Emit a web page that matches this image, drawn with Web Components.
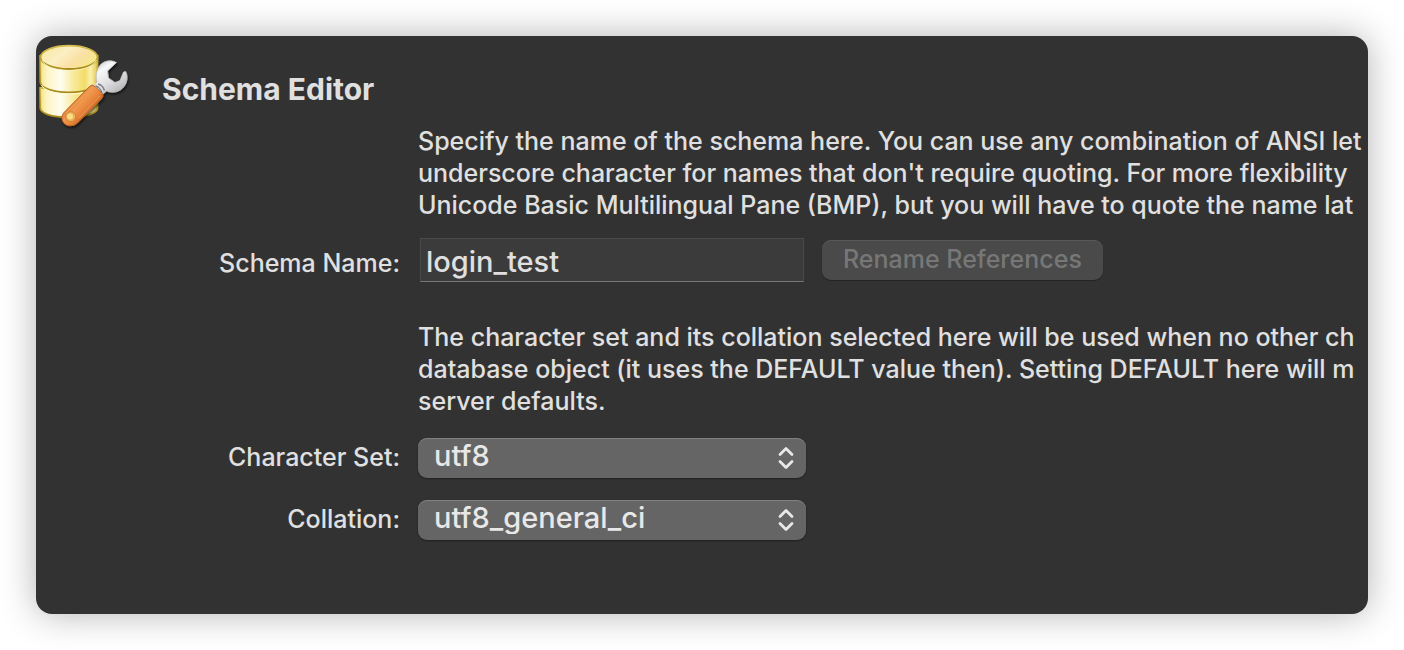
<!DOCTYPE html>
<html lang="en">
<head>
<meta charset="utf-8">
<title>Schema Editor</title>
<style>
  body {
    margin: 0;
    background: #fff;
    color: #e0e0e0;
    font: 500 25px/32px Inter, "Liberation Sans", sans-serif;
    --label-width: 364px;
    --label-gap: 18px;
    --field-width: 388px;
    --control-size: 29px;
  }
</style>
</head>
<body>
<editor-panel>
  <editor-header slot="header">Schema Editor</editor-header>
  <help-text>
    <div>Specify the name of the schema here. You can use any combination of ANSI let</div>
    <div>underscore character for names that don't require quoting. For more flexibility</div>
    <div>Unicode Basic Multilingual Pane (BMP), but you will have to quote the name lat</div>
  </help-text>
  <text-field label="Schema Name:" value="login_test">
    <action-button disabled>Rename References</action-button>
  </text-field>
  <help-text>
    <div>The character set and its collation selected here will be used when no other ch</div>
    <div>database object (it uses the DEFAULT value then). Setting DEFAULT here will m</div>
    <div>server defaults.</div>
  </help-text>
  <popup-field label="Character Set:" value="utf8"></popup-field>
  <popup-field label="Collation:" value="utf8_general_ci"></popup-field>
</editor-panel>

<script>
  const define = (name, markup, setup) => {
    customElements.define(name, class extends HTMLElement {
      constructor() {
        super();
        this.attachShadow({ mode: "open" }).innerHTML = markup;
      }
      connectedCallback() {
        if (setup) setup(this, this.shadowRoot);
      }
    });
  };

  const rowStyle = `
    :host {
      display: grid;
      grid-template-columns: var(--label-width) minmax(0, 1fr);
      column-gap: var(--label-gap);
      align-items: center;
    }
    label { text-align: right; white-space: nowrap; }
  `;

  define("editor-panel", `
    <style>
      :host {
        display: block;
        margin: 36px;
        padding-bottom: 73px;
        border-radius: 16px;
        overflow: hidden;
        background: #323232;
        box-shadow: 0 0 36px rgba(0, 0, 0, .3);
      }
      .form { display: flex; flex-direction: column; margin-top: -7px; }
      ::slotted(text-field) { margin: 17px 0 39px; }
      ::slotted(popup-field) { margin-top: 21px; }
    </style>
    <slot name="header"></slot>
    <div class="form"><slot></slot></div>
  `);

  define("editor-header", `
    <style>
      :host { display: flex; align-items: center; gap: 30px; height: 96px; }
      h1 { margin: 10px 0 0; font-size: 30px; line-height: 36px; font-weight: 700; }
    </style>
    <schema-icon></schema-icon>
    <h1><slot></slot></h1>
  `);

  define("schema-icon", `
    <style>
      :host { display: block; flex: none; width: 96px; height: 96px; }
      svg { display: block; }
    </style>
    <svg width="96" height="96" viewBox="0 0 96 96" aria-hidden="true">
      <defs>
        <linearGradient id="side">
          <stop offset="0" stop-color="#f5e48a"/>
          <stop offset=".12" stop-color="#fdf5c4"/>
          <stop offset=".36" stop-color="#fffdf0"/>
          <stop offset=".58" stop-color="#f8ea9c"/>
          <stop offset=".78" stop-color="#f2dc68"/>
          <stop offset=".88" stop-color="#fbf0ae"/>
          <stop offset="1" stop-color="#e4c84c"/>
        </linearGradient>
        <linearGradient id="lid" x1="0" y1="0" x2="1" y2=".5">
          <stop offset="0" stop-color="#f7e59a"/>
          <stop offset=".45" stop-color="#fbefc4"/>
          <stop offset=".75" stop-color="#fae0a4"/>
          <stop offset="1" stop-color="#f6e88c"/>
        </linearGradient>
        <linearGradient id="rim" x1="0" y1="0" x2="0" y2="1">
          <stop offset="0" stop-color="#d3bc4c"/>
          <stop offset="1" stop-color="#a88a1c"/>
        </linearGradient>
        <linearGradient id="steel" x1="0" y1="0" x2=".7" y2="1">
          <stop offset="0" stop-color="#b8b8ba"/>
          <stop offset=".3" stop-color="#f8f8f8"/>
          <stop offset=".65" stop-color="#dedee0"/>
          <stop offset="1" stop-color="#b4b4b8"/>
        </linearGradient>
        <linearGradient id="grip" x1=".2" y1=".25" x2=".75" y2=".75">
          <stop offset="0" stop-color="#c96524"/>
          <stop offset=".4" stop-color="#f0994e"/>
          <stop offset=".65" stop-color="#e8843c"/>
          <stop offset="1" stop-color="#b85518"/>
        </linearGradient>
        <filter id="shade" x="-20%" y="-20%" width="150%" height="150%">
          <feDropShadow dx="1" dy="2" stdDeviation="1.3" flood-color="#000" flood-opacity=".6"/>
        </filter>
      </defs>
      <g stroke="url(#rim)" stroke-width="1.8">
        <path d="M4.300 52V72C4.300 77 15 81.300 33 81.300S61.500 77 61.500 72V52Z" fill="url(#side)"/>
        <path d="M4.300 20V46C4.300 52 17 56.300 33 56.300S61.500 52 61.500 46V20Z" fill="url(#side)"/>
        <ellipse cx="33" cy="21.300" rx="28.500" ry="11.700" fill="url(#lid)"/>
      </g>
      <path d="M5.500 49C8 54.500 19 58 33 58S58 54.500 60.500 49" fill="none" stroke="#fff9d2" stroke-width="1"/>
      <path d="M6 24C9 31 20 34.500 33 34.500S57 31 60.500 24" fill="none" stroke="#fff8c8" stroke-width=".8"/>
      <g filter="url(#shade)">
        <path d="M80.500 26.500C74 23 66 25 62.500 31.500C59.800 36.500 60 42 61 46L57.500 50L66.500 58.500L70.500 55C77 57.500 84 56 88 50.500C91.500 46 92 40 89.700 35.500L87.500 36L84 44.500L79 46.500L72.500 42L71.500 35Z"
          fill="url(#steel)" stroke="#c4c4c6" stroke-width=".8" stroke-linejoin="round"/>
        <path d="M59.500 50C62 50.500 65 53.500 66 57M62 48C65 48.500 67.500 51.500 68.500 54.500" fill="none" stroke="#7c7d80" stroke-width="1.400"/>
        <path d="M53.500 50.500Q56 47.500 59 50.500L66 57Q68.500 60 65.500 63L41 87.500Q38.500 90 34 89.800C28.500 89.500 25.500 85.500 26 80.500Q26.200 78.500 28 76.500Z"
          fill="url(#grip)" stroke="#b96425" stroke-width=".9"/>
        <path d="M56 51L30 77M64 60L43 82" fill="none" stroke="#f6ad6c" stroke-width="1" opacity=".65"/>
      </g>
      <circle cx="34.700" cy="80.700" r="5" fill="#ecb255" stroke="#d18236" stroke-width="1"/>
      <circle cx="34" cy="80.500" r="3" fill="#f8dc86"/>
    </svg>
  `);

  define("help-text", `
    <style>
      :host {
        display: block;
        margin-left: calc(var(--label-width) + var(--label-gap));
        white-space: nowrap;
      }
    </style>
    <slot></slot>
  `);

  define("text-field", `
    <style>
      ${rowStyle}
      label { padding-top: 6px; }
      .content { display: flex; align-items: center; gap: 18px; padding-left: 2px; }
      input {
        box-sizing: border-box;
        width: calc(var(--field-width) - 4px);
        height: 44px;
        margin: 0;
        padding: 2px 5px 0;
        border: 1px solid #4a4a4a;
        border-bottom: 1px solid #777;
        border-radius: 0;
        outline: none;
        background: #3b3b3b;
        color: inherit;
        font: inherit;
        font-size: var(--control-size);
      }
    </style>
    <label for="input"></label>
    <div class="content"><input id="input" type="text"><slot></slot></div>
  `, (host, root) => {
    root.querySelector("label").textContent = host.getAttribute("label");
    root.querySelector("input").value = host.getAttribute("value");
  });

  define("action-button", `
    <style>
      :host { display: block; }
      button {
        display: block;
        height: 40px;
        margin: 0;
        padding: 0 21px 2px;
        border: 0;
        border-radius: 9px;
        background: #4a4a4a;
        box-shadow: inset 0 1px #585858, 0 1px 1px rgba(0, 0, 0, .3);
        color: #777;
        font: inherit;
        white-space: nowrap;
      }
    </style>
    <button type="button"><slot></slot></button>
  `, (host, root) => {
    root.querySelector("button").disabled = host.hasAttribute("disabled");
  });

  define("popup-field", `
    <style>
      ${rowStyle}
      :host { margin-bottom: 1px; }
      label { padding-bottom: 2px; }
      .popup { display: grid; width: var(--field-width); align-items: center; }
      select, svg { grid-area: 1 / 1; }
      select {
        appearance: none;
        width: 100%;
        height: 40px;
        margin: 0;
        padding: 0 48px 4px 16px;
        border: 0;
        border-radius: 9px;
        background: #656565;
        box-shadow: inset 0 1px #818181, 0 1px 2px rgba(0, 0, 0, .4);
        color: #e8e8e8;
        font: inherit;
        font-size: var(--control-size);
      }
      svg { justify-self: end; margin-right: 12px; pointer-events: none; }
    </style>
    <label for="select"></label>
    <div class="popup">
      <select id="select"></select>
      <svg width="16" height="24" viewBox="0 0 16 24" fill="none" stroke="#e8e8e8"
        stroke-width="2.800" stroke-linecap="round" stroke-linejoin="round" aria-hidden="true">
        <path d="M2 8.500L8 2.500L14 8.500M2 15.500L8 21.500L14 15.500"/>
      </svg>
    </div>
  `, (host, root) => {
    root.querySelector("label").textContent = host.getAttribute("label");
    root.querySelector("select").replaceChildren(new Option(host.getAttribute("value")));
  });
</script>
</body>
</html>
